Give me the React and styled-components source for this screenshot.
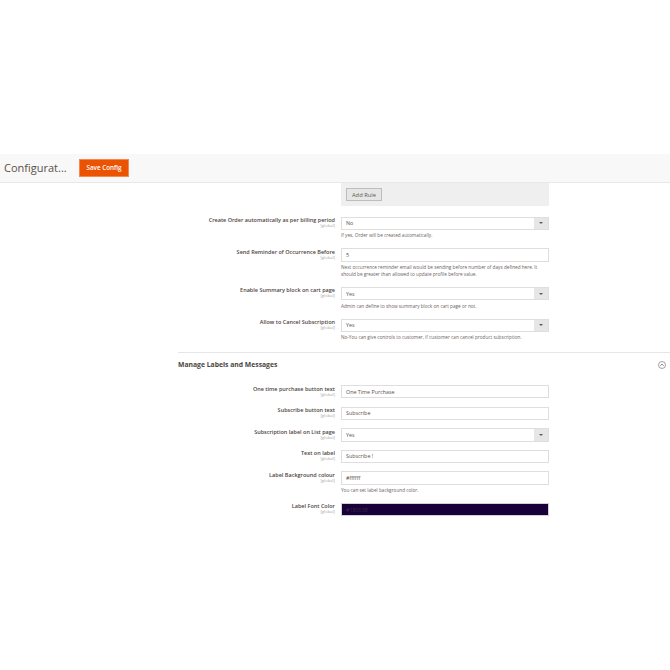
import React from 'react';
import styled, { createGlobalStyle } from 'styled-components';

const GlobalStyle = createGlobalStyle`
  html, body {
    margin: 0;
    padding: 0;
    background: #fff;
    font-family: 'Open Sans', 'Liberation Sans', sans-serif;
  }
`;

const Page = styled.div`
  width: 670px;
  height: 670px;
  padding-top: 154px;
  box-sizing: border-box;
  overflow: hidden;
`;

const Header = styled.header`
  height: 28.5px;
  box-sizing: border-box;
  padding-left: 4px;
  display: flex;
  align-items: center;
  gap: 12px;
  background: #f8f8f8;
  border-bottom: 1px solid #e8e8e8;
`;

const Title = styled.h1`
  margin: 0;
  width: 63px;
  font-size: 11px;
  font-weight: 400;
  color: #5a504a;
  white-space: nowrap;
`;

const SaveButton = styled.button`
  width: 50px;
  height: 18.5px;
  padding: 0;
  border: 1px solid #f28a52;
  background: #eb5202;
  color: #fff;
  font-family: inherit;
  font-size: 6.3px;
  font-weight: 600;
`;

const Content = styled.main`
  padding-left: 178px;
`;

const RuleBox = styled.div`
  width: 208px;
  height: 23.5px;
  margin-left: 163px;
  margin-bottom: 10.5px;
  padding: 5.8px 0 0 5px;
  box-sizing: border-box;
  background: #efefef;
`;

const RuleButton = styled.button`
  display: block;
  width: 36px;
  height: 12.5px;
  padding: 0;
  border: 1px solid #bdbdbd;
  background: #e6e6e6;
  color: #5f5750;
  font-family: inherit;
  font-size: 5.8px;
`;

const Row = styled.div`
  display: flex;
  gap: 6px;
  padding-bottom: 8.2px;
`;

const LabelCol = styled.div`
  width: 157px;
  text-align: right;
  padding-top: 0.5px;
`;

const Label = styled.div`
  font-size: 5.5px;
  line-height: 7px;
  font-weight: 600;
  color: #4d443e;
  white-space: nowrap;
`;

const Scope = styled.div`
  font-size: 4.2px;
  line-height: 4.5px;
  color: #a8a8a8;
`;

const FieldCol = styled.div`
  width: 208px;
`;

const Control = styled.div`
  height: 13.4px;
  box-sizing: border-box;
  padding-left: 4px;
  display: flex;
  align-items: center;
  justify-content: space-between;
  border: 1px solid #dedede;
  background: #fff;
  color: #5a504a;
  font-size: 5.35px;
`;

const SelectArrow = styled.span`
  width: 14px;
  height: 11.4px;
  display: flex;
  align-items: center;
  justify-content: center;
  background: #e6e6e6;
  &::after {
    content: '';
    border-top: 2.5px solid #625a54;
    border-left: 2px solid transparent;
    border-right: 2px solid transparent;
  }
`;

const ColorControl = styled(Control)`
  background: #180038;
  border-color: #d2d2d2;
  color: #3a2a4e;
`;

const Help = styled.div`
  margin-top: 2.3px;
  margin-bottom: 0.7px;
  font-size: 4.7px;
  line-height: 7.1px;
  color: #6b635d;
`;

const SectionHead = styled.div`
  height: 32.8px;
  margin-top: 2px;
  padding: 8px 4px 0 0;
  border-top: 1px solid #e6e6e6;
  display: flex;
  align-items: flex-start;
  justify-content: space-between;
  box-sizing: border-box;
`;

const SectionTitle = styled.h2`
  margin: 0;
  font-size: 6.8px;
  line-height: 8px;
  font-weight: 700;
  color: #4a4540;
`;

const Collapse = () => (
  <svg width="8" height="8" viewBox="0 0 16 16" fill="none" stroke="#6b635d" strokeWidth="1.2">
    <circle cx="8" cy="8" r="7" />
    <path d="M4.5 9.5 8 6l3.5 3.5" strokeWidth="1.5" />
  </svg>
);

const Field = ({ label, value, select, color, help }) => {
  const Box = color ? ColorControl : Control;
  return (
    <Row>
      <LabelCol>
        <Label>{label}</Label>
        <Scope>[global]</Scope>
      </LabelCol>
      <FieldCol>
        <Box>
          {value}
          {select && <SelectArrow />}
        </Box>
        {help && <Help>{help}</Help>}
      </FieldCol>
    </Row>
  );
};

const App = () => (
  <>
    <GlobalStyle />
    <Page>
      <Header>
        <Title>Configurat...</Title>
        <SaveButton>Save Config</SaveButton>
      </Header>
      <Content>
        <RuleBox>
          <RuleButton>Add Rule</RuleButton>
        </RuleBox>
        <Field
          label="Create Order automatically as per billing period"
          value="No"
          select
          help="If yes, Order will be created automatically."
        />
        <Field
          label="Send Reminder of Occurrence Before"
          value="5"
          help="Next occurrence reminder email would be sending before number of days defined here. It should be greater than allowed to update profile before value."
        />
        <Field
          label="Enable Summary block on cart page"
          value="Yes"
          select
          help="Admin can define to show summary block on cart page or not."
        />
        <Field
          label="Allow to Cancel Subscription"
          value="Yes"
          select
          help="No-You can give controls to customer, if customer can cancel product subscription."
        />
        <SectionHead>
          <SectionTitle>Manage Labels and Messages</SectionTitle>
          <Collapse />
        </SectionHead>
        <Field label="One time purchase button text" value="One Time Purchase" />
        <Field label="Subscribe button text" value="Subscribe" />
        <Field label="Subscription label on List page" value="Yes" select />
        <Field label="Text on label" value="Subscribe !" />
        <Field
          label="Label Background colour"
          value="#ffffff"
          help="You can set label background color."
        />
        <Field label="Label Font Color" value="#180038" color />
      </Content>
    </Page>
  </>
);

export default App;
